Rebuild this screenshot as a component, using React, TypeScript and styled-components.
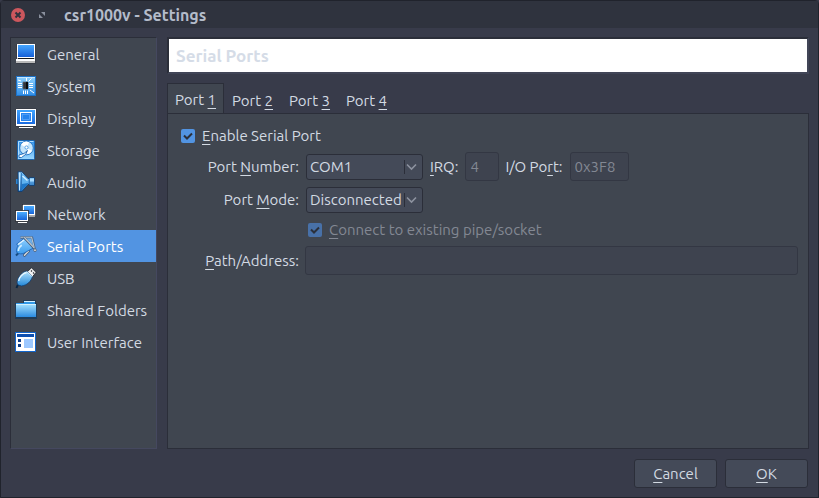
import React, { useId, useState } from "react";
import type { ReactNode } from "react";
import styled, { createGlobalStyle, css } from "styled-components";

const color = {
  window: "#383b4a",
  titleBar: "#2f333e",
  panel: "#404650",
  line: "#2b2e39",
  control: "#444a58",
  text: "#d3dae3",
  accent: "#5294e2",
  disabled: "#838893",
};

const GlobalStyle = createGlobalStyle`
  *, *::before, *::after { box-sizing: border-box; }
  body {
    margin: 0;
    background: ${color.window};
    color: ${color.text};
    font: 15px/20px Ubuntu, "Noto Sans", sans-serif;
  }
  button, input, select { font: inherit; color: inherit; margin: 0; }
`;

const Window = styled.div`
  display: flex;
  flex-direction: column;
  min-height: 100vh;
  border: 1px solid #20232c;
  border-radius: 4px 4px 0 0;
  background: ${color.window};
`;

const TitleBar = styled.header`
  display: flex;
  align-items: center;
  height: 27px;
  padding-left: 10px;
  background: ${color.titleBar};
`;

const WindowButton = styled.button`
  display: grid;
  padding: 0;
  border: 0;
  background: none;
  margin-right: 10px;
`;

const Title = styled.h1`
  margin: 0 0 0 5px;
  font-size: 16px;
  line-height: 20px;
  font-weight: 700;
  color: #b4bcca;
`;

const Body = styled.div`
  display: flex;
  flex: 1;
  gap: 10px;
  padding: 9px 9px 0;
`;

const Sidebar = styled.nav`
  flex: 0 0 147px;
  border: 1px solid ${color.line};
  border-right-color: #45485f;
  border-bottom-color: #45485f;
  background: ${color.panel};
`;

const SidebarItem = styled.a<{ $selected?: boolean }>`
  display: flex;
  align-items: center;
  gap: 10px;
  height: 32px;
  padding: 0 4px;
  color: ${(p) => (p.$selected ? "#ffffff" : color.text)};
  background: ${(p) => (p.$selected ? color.accent : "transparent")};
  text-decoration: none;
  white-space: nowrap;
`;

const SidebarText = styled.span`
  padding-top: 2px;
`;

const IconSvg = styled.svg`
  width: 22px;
  height: 22px;
  flex: none;
`;

const Main = styled.main`
  display: flex;
  flex: 1;
  min-width: 0;
  flex-direction: column;
`;

const SectionHeading = styled.h2`
  margin: 0 0 9px;
  height: 37px;
  padding: 0 7px;
  border: 2px solid #414557;
  border-top-color: ${color.line};
  border-left-color: ${color.line};
  background: #ffffff;
  color: #d5dce7;
  font-size: 17px;
  line-height: 33px;
  font-weight: 700;
`;

const TabList = styled.div`
  display: flex;
  height: 31px;
  margin-bottom: -1px;
`;

const Tab = styled.button<{ $active: boolean }>`
  width: 57px;
  padding: 3px 0 0;
  border: 1px solid transparent;
  border-bottom: 0;
  background: transparent;
  ${(p) =>
    p.$active &&
    css`
      padding-top: 1px;
      border-color: ${color.line};
      background: ${color.panel};
    `}
`;

const TabPanel = styled.section`
  display: flex;
  flex: 1;
  flex-direction: column;
  gap: 6px;
  padding: 11px 10px;
  border: 1px solid ${color.line};
  background: ${color.panel};
`;

const FormGrid = styled.div`
  display: grid;
  grid-template-columns: 121px 1fr;
  column-gap: 6px;
  row-gap: 6px;
  align-items: center;
`;

const FieldLabel = styled.label<{ $end?: boolean }>`
  white-space: nowrap;
  justify-self: ${(p) => (p.$end ? "end" : "auto")};
`;

const FieldRow = styled.div`
  display: flex;
  align-items: center;
  gap: 6px;
  padding-left: 1px;
`;

const Group = styled.div`
  display: flex;
  align-items: center;
  gap: 7px;
`;

const TextField = styled.input<{ $width: string }>`
  width: ${(p) => p.$width};
  height: 29px;
  padding: 0 4px;
  border: 1px solid #333743;
  border-radius: 3px;
  background: #3e434f;
  &:disabled { color: ${color.disabled}; }
`;

const SelectFrame = styled.span`
  display: grid;
  width: 117px;
  margin-right: 1px;
  > * { grid-area: 1 / 1; }
  > svg {
    justify-self: end;
    align-self: center;
    pointer-events: none;
  }
`;

const SelectControl = styled.select`
  appearance: none;
  width: 100%;
  height: 26px;
  padding: 0 16px 0 3px;
  border: 1px solid ${color.line};
  border-radius: 3px;
  background: ${color.control};
`;

const CheckLabel = styled.label<{ $disabled?: boolean }>`
  display: flex;
  align-items: center;
  gap: 7px;
  height: 21px;
  padding-left: 3px;
  color: ${(p) => (p.$disabled ? color.disabled : color.text)};
`;

const CheckFrame = styled.span`
  display: grid;
  width: 14px;
  height: 14px;
  > * { grid-area: 1 / 1; }
  > svg { pointer-events: none; }
`;

const CheckInput = styled.input`
  appearance: none;
  width: 14px;
  height: 14px;
  border-radius: 2px;
  background: ${color.line};
  &:checked { background: ${color.accent}; }
  &:checked:disabled { background: #4871a8; }
`;

const Mnemonic = styled.span`
  text-decoration: underline;
  text-decoration-thickness: 1px;
  text-underline-offset: 3px;
  text-decoration-skip-ink: none;
`;

const Footer = styled.footer`
  display: flex;
  justify-content: flex-end;
  gap: 8px;
  padding: 10px 10px 9px;
`;

const PushButton = styled.button`
  width: 83px;
  height: 29px;
  padding: 0;
  border: 1px solid ${color.line};
  border-radius: 3px;
  background: ${color.control};
`;

function Icon({ children }: { children: ReactNode }) {
  return (
    <IconSvg viewBox="0 0 22 22" aria-hidden="true">
      {children}
    </IconSvg>
  );
}

function Gradient({ id, from, to }: { id: string; from: string; to: string }) {
  return (
    <linearGradient id={id} x1="0" y1="0" x2="0" y2="1">
      <stop offset="0" stopColor={from} />
      <stop offset="1" stopColor={to} />
    </linearGradient>
  );
}

const GeneralIcon = () => (
  <Icon>
    <Gradient id="gen" from="#45a6ff" to="#1660d8" />
    <rect x="1" y="1" width="20" height="20" rx="1" fill="#2c3038" opacity=".45" />
    <rect x="2" y="1" width="18" height="15" fill="#fff" />
    <rect x="3" y="2" width="16" height="12" fill="url(#gen)" />
    <path d="M3 15h16l1 2H2z" fill="#17191d" />
    <rect x="1" y="16" width="19" height="2" fill="#fff" />
    <rect x="1" y="18" width="19" height="2" fill="#b8b8b8" />
  </Icon>
);

const SystemIcon = () => (
  <Icon>
    <Gradient id="sys" from="#8fd2ff" to="#2f8de6" />
    <rect x="1.5" y="1.5" width="19" height="19" fill="url(#sys)" stroke="#1c72c8" />
    <path d="M2 2.5h18" fill="none" stroke="#c5e7ff" />
    <path
      d="M11.5 3v3M16.5 3.5l-3 3M3 8.5h4M3 10.5h4M3 12.5h4M14 8.5h4M14 10.5h4M14 12.5h4M8.5 15.5V19M10.5 15.5V19M12.5 15.5V19M3 5l3 1M15 15l4 3"
      stroke="#fff"
    />
    <rect x="8" y="7" width="5" height="7" fill="#30343b" stroke="#62686f" strokeWidth=".7" />
    <path d="M12 7v7" stroke="#080a0d" strokeWidth="2" />
  </Icon>
);

const DisplayIcon = () => (
  <Icon>
    <Gradient id="dis" from="#3fa4ff" to="#1a6be0" />
    <rect x=".5" y="1.5" width="21" height="18.5" rx="1" fill="#262a31" opacity=".5" />
    <rect x="1" y="2" width="20" height="17" fill="#fff" />
    <rect x="2" y="3" width="18" height="14" fill="url(#dis)" />
    <rect x="5.5" y="5.5" width="11" height="9" fill="#2683ec" stroke="#fff" />
    <rect x="7.5" y="7.5" width="7" height="5" fill="none" stroke="#5fa8ff" strokeWidth=".7" />
    <path d="M4 20h14v1H4z" fill="#fff" />
  </Icon>
);

const StorageIcon = () => (
  <Icon>
    <Gradient id="sto" from="#2d8fe8" to="#9cd8ff" />
    <rect x="2.5" y="1.5" width="17" height="19" rx="1" fill="url(#sto)" stroke="#1a65b0" />
    <path d="M3.5 19.5v-17h15" fill="none" stroke="#b0deff" />
    <circle cx="11.5" cy="9" r="6.8" fill="#c6e6fc" stroke="#1f6fc0" strokeWidth=".9" />
    <path d="M11.5 9L6 5.5a6.4 6.4 0 0 1 8-2.3z" fill="#fff" />
    <path d="M11.5 9l5.6 2.8a6.4 6.4 0 0 1-4.6 3.4z" fill="#fff" />
    <circle cx="11.5" cy="8.5" r="1.6" fill="#fff" stroke="#4a9ae0" strokeWidth=".9" />
    <path d="M12.5 11.5l-2 4-4 3L4 18.5V16l5-1.5z" fill="#fff" stroke="#1d66b4" strokeWidth=".9" />
  </Icon>
);

const AudioIcon = () => (
  <Icon>
    <Gradient id="aud" from="#8fd2ff" to="#1565b6" />
    <rect x="1" y="8" width="2" height="5" fill="#2b85d1" />
    <path d="M3 .8h4L13 7.5h1.5V6.5h5v8h-5V13.5H13l-6 7H3z" fill="url(#aud)" stroke="#123e70" strokeWidth=".9" />
    <path d="M7 2.5l6 6v4l-6 6.5z" fill="#5fb2ef" />
    <path d="M7 13l6-1v.8l-6 6.4z" fill="#1f78c8" />
    <path d="M15 7.5h4v3h-4z" fill="#a8dcff" />
    <path d="M4.5 1.5v18" stroke="#bfe5ff" />
    <path d="M6.5 2v17M14.5 7v7" stroke="#2a70b4" strokeWidth=".8" />
    <path d="M7.5 5l5 4.5" stroke="#d5efff" strokeWidth="1.4" />
  </Icon>
);

const NetworkIcon = () => (
  <Icon>
    <Gradient id="net" from="#4cadff" to="#1765db" />
    <rect x="7.5" y="1.5" width="13" height="11" fill="#fff" stroke="#22262d" strokeWidth=".6" />
    <rect x="9" y="3" width="10" height="8" fill="url(#net)" />
    <path d="M12 13h8" stroke="#fff" />
    <rect x=".5" y="7.5" width="13" height="11" fill="#fff" stroke="#22262d" strokeWidth=".8" />
    <rect x="2" y="9" width="10" height="8" fill="url(#net)" />
    <path d="M3 19.5h9" stroke="#fff" />
  </Icon>
);

const SerialIcon = () => (
  <Icon>
    <Gradient id="ser" from="#8fd0ff" to="#3d9cec" />
    <path d="M5.5 2.5H17l3 13" fill="none" stroke="#4b6788" strokeWidth="2.4" strokeLinejoin="round" />
    <path d="M6 2.3h10.6l3.2 12.7" fill="none" stroke="#b9c5d0" strokeWidth="1.1" strokeLinecap="round" />
    <path d="M11 3.5h5l2.5 8.5z" fill="#6fb0ea" />
    <path d="M9.5 20.2l4-4.2" stroke="#3f5570" strokeWidth="3" strokeLinecap="round" />
    <path d="M9.5 20.2l4-4.2" stroke="#d4d9dd" strokeWidth="1.5" strokeLinecap="round" />
    <path d="M1 20.5l2.5-2.5" stroke="#164b80" strokeWidth="2" />
    <path d="M9 3.5L1.5 9.3l1.8 1.5C1.8 12.5 1 15 1.8 17.5c2 1.6 4.8 1.8 7.2.7l2.5-1.5L18.5 13z" fill="url(#ser)" stroke="#1c5fae" strokeWidth=".8" strokeLinejoin="round" />
    <path d="M3 9.6l6-4.6" stroke="#e2f3ff" strokeWidth="1.3" />
    <path d="M3.4 16c0-2.5 1.2-4.5 3.4-5.8" fill="none" stroke="#d2edff" strokeWidth="1.6" />
    <path d="M9.5 3l9.3 10" stroke="#4b617c" strokeWidth="2.2" strokeLinecap="round" />
    <path d="M9.5 2.6l9.5 10" stroke="#c9d0d6" strokeWidth="1.1" strokeLinecap="round" />
    <circle cx="20" cy="15.2" r="1.4" fill="#d8dce0" stroke="#3f5570" strokeWidth=".7" />
  </Icon>
);

const UsbIcon = () => (
  <Icon>
    <Gradient id="usb" from="#b5e5ff" to="#2287d7" />
    <path d="M12.5 4.5L16.5.8l4.5 4.5-3.5 4.5z" fill="#f3f3f3" stroke="#1d2025" strokeWidth=".8" />
    <path d="M16 3.5l1 1M18 5.5l1 1" stroke="#30343a" strokeWidth="1.3" />
    <path d="M1.5 21c.5-1.8 1-2.7 2-3.3" fill="none" stroke="#0b2743" strokeWidth="2" />
    <path d="M12 4l5.5 5.5c-1.5 5-5.5 8.8-11 9.5L3 18c-2-3-.5-7 3-10.5C7.8 5.4 9.7 4.3 12 4z" fill="url(#usb)" stroke="#103e70" strokeWidth=".8" />
    <path d="M11.5 5.5c-4 .8-7.5 5-7.8 8.5" fill="none" stroke="#e8f8ff" strokeWidth="1.3" />
    <path d="M12 4.5l5 5" stroke="#e6f6ff" strokeWidth="1" />
  </Icon>
);

const FolderIcon = () => (
  <Icon>
    <Gradient id="fol" from="#a5e2ff" to="#2b8be0" />
    <path d="M0 4h8V1h13v3h1v16H0z" fill="#11375d" opacity=".7" />
    <path d="M1 4h8V2h11v4H1z" fill="#3199e8" />
    <path d="M9 2.5h11" stroke="#d6f1ff" />
    <rect x="1" y="5" width="20" height="13" fill="url(#fol)" />
    <path d="M1 5.5h20" stroke="#d4f2ff" />
  </Icon>
);

const InterfaceIcon = () => (
  <Icon>
    <rect x="0" y="1" width="21" height="20" fill="#1265cb" />
    <rect x="1" y="2" width="19" height="18" fill="#fff" />
    <rect x="2" y="3" width="17" height="3" fill="#0d4fb0" />
    <rect x="3" y="8" width="3" height="3" fill="#0c3c86" />
    <rect x="3" y="13" width="3" height="3" fill="#0c3c86" />
    <rect x="9" y="8" width="9" height="9" fill="#9cc8ff" />
  </Icon>
);

const sections = [
  { name: "General", icon: <GeneralIcon /> },
  { name: "System", icon: <SystemIcon /> },
  { name: "Display", icon: <DisplayIcon /> },
  { name: "Storage", icon: <StorageIcon /> },
  { name: "Audio", icon: <AudioIcon /> },
  { name: "Network", icon: <NetworkIcon /> },
  { name: "Serial Ports", icon: <SerialIcon /> },
  { name: "USB", icon: <UsbIcon /> },
  { name: "Shared Folders", icon: <FolderIcon /> },
  { name: "User Interface", icon: <InterfaceIcon /> },
];

function Select({ id, options }: { id: string; options: string[] }) {
  return (
    <SelectFrame>
      <SelectControl id={id}>
        {options.map((o) => (
          <option key={o}>{o}</option>
        ))}
      </SelectControl>
      <svg width="20" height="16" viewBox="0 0 20 16" fill="none" aria-hidden="true">
        <path d="M1.5 1v14" stroke={color.line} />
        <path d="M4 5.5l4.5 4.5L13 5.5" stroke="#8d929f" strokeWidth="1.6" />
      </svg>
    </SelectFrame>
  );
}

function Checkbox({
  checked,
  disabled,
  onChange,
  children,
}: {
  checked: boolean;
  disabled?: boolean;
  onChange?: (value: boolean) => void;
  children: ReactNode;
}) {
  return (
    <CheckLabel $disabled={disabled}>
      <CheckFrame>
        <CheckInput
          type="checkbox"
          checked={checked}
          disabled={disabled}
          onChange={(e) => onChange?.(e.target.checked)}
        />
        {checked && (
          <svg width="14" height="14" viewBox="0 0 14 14" fill="none" aria-hidden="true">
            <path d="M3 6.5L6 9.5l5-5" stroke="#2b303b" strokeWidth="2" />
          </svg>
        )}
      </CheckFrame>
      <span>{children}</span>
    </CheckLabel>
  );
}

export default function App() {
  const id = useId();
  const [port, setPort] = useState(1);
  const [enabled, setEnabled] = useState(true);

  return (
    <>
      <GlobalStyle />
      <Window>
        <TitleBar>
          <WindowButton aria-label="Close">
            <svg width="14" height="14" viewBox="0 0 14 14" aria-hidden="true">
              <circle cx="7" cy="7" r="7" fill="#cc575d" />
              <path d="M4.5 4.5l5 5M9.5 4.5l-5 5" stroke="#2f333e" strokeWidth="2" />
            </svg>
          </WindowButton>
          <WindowButton aria-label="Maximize">
            <svg width="14" height="14" viewBox="0 0 14 14" aria-hidden="true">
              <path d="M6 4h4v4zM4 6v4h4z" fill="#8a909d" />
            </svg>
          </WindowButton>
          <Title>csr1000v - Settings</Title>
        </TitleBar>
        <Body>
          <Sidebar aria-label="Settings sections">
            {sections.map(({ name, icon }) => (
              <SidebarItem key={name} href="#" $selected={name === "Serial Ports"}>
                {icon}
                <SidebarText>{name}</SidebarText>
              </SidebarItem>
            ))}
          </Sidebar>
          <Main>
            <SectionHeading>Serial Ports</SectionHeading>
            <TabList role="tablist">
              {[1, 2, 3, 4].map((n) => (
                <Tab key={n} role="tab" aria-selected={port === n} $active={port === n} onClick={() => setPort(n)}>
                  Port <Mnemonic>{n}</Mnemonic>
                </Tab>
              ))}
            </TabList>
            <TabPanel role="tabpanel">
              <Checkbox checked={enabled} onChange={setEnabled}>
                <Mnemonic>E</Mnemonic>nable Serial Port
              </Checkbox>
              <FormGrid>
                <FieldLabel $end htmlFor={`${id}-number`}>
                  Port <Mnemonic>N</Mnemonic>umber:
                </FieldLabel>
                <FieldRow>
                  <Select id={`${id}-number`} options={["COM1", "COM2", "COM3", "COM4", "User-defined"]} />
                  <Group>
                    <FieldLabel htmlFor={`${id}-irq`}>
                      <Mnemonic>I</Mnemonic>RQ:
                    </FieldLabel>
                    <TextField $width="34px" id={`${id}-irq`} defaultValue="4" disabled />
                  </Group>
                  <Group>
                    <FieldLabel htmlFor={`${id}-io`}>
                      I/O Po<Mnemonic>r</Mnemonic>t:
                    </FieldLabel>
                    <TextField $width="59px" id={`${id}-io`} defaultValue="0x3F8" disabled />
                  </Group>
                </FieldRow>
                <FieldLabel $end htmlFor={`${id}-mode`}>
                  Port <Mnemonic>M</Mnemonic>ode:
                </FieldLabel>
                <FieldRow>
                  <Select id={`${id}-mode`} options={["Disconnected", "Host Pipe", "Host Device", "Raw File", "TCP"]} />
                </FieldRow>
                <span />
                <Checkbox checked disabled>
                  <Mnemonic>C</Mnemonic>onnect to existing pipe/socket
                </Checkbox>
                <FieldLabel $end htmlFor={`${id}-path`}>
                  <Mnemonic>P</Mnemonic>ath/Address:
                </FieldLabel>
                <TextField $width="100%" id={`${id}-path`} disabled />
              </FormGrid>
            </TabPanel>
          </Main>
        </Body>
        <Footer>
          <PushButton>
            <Mnemonic>C</Mnemonic>ancel
          </PushButton>
          <PushButton>
            <Mnemonic>O</Mnemonic>K
          </PushButton>
        </Footer>
      </Window>
    </>
  );
}
